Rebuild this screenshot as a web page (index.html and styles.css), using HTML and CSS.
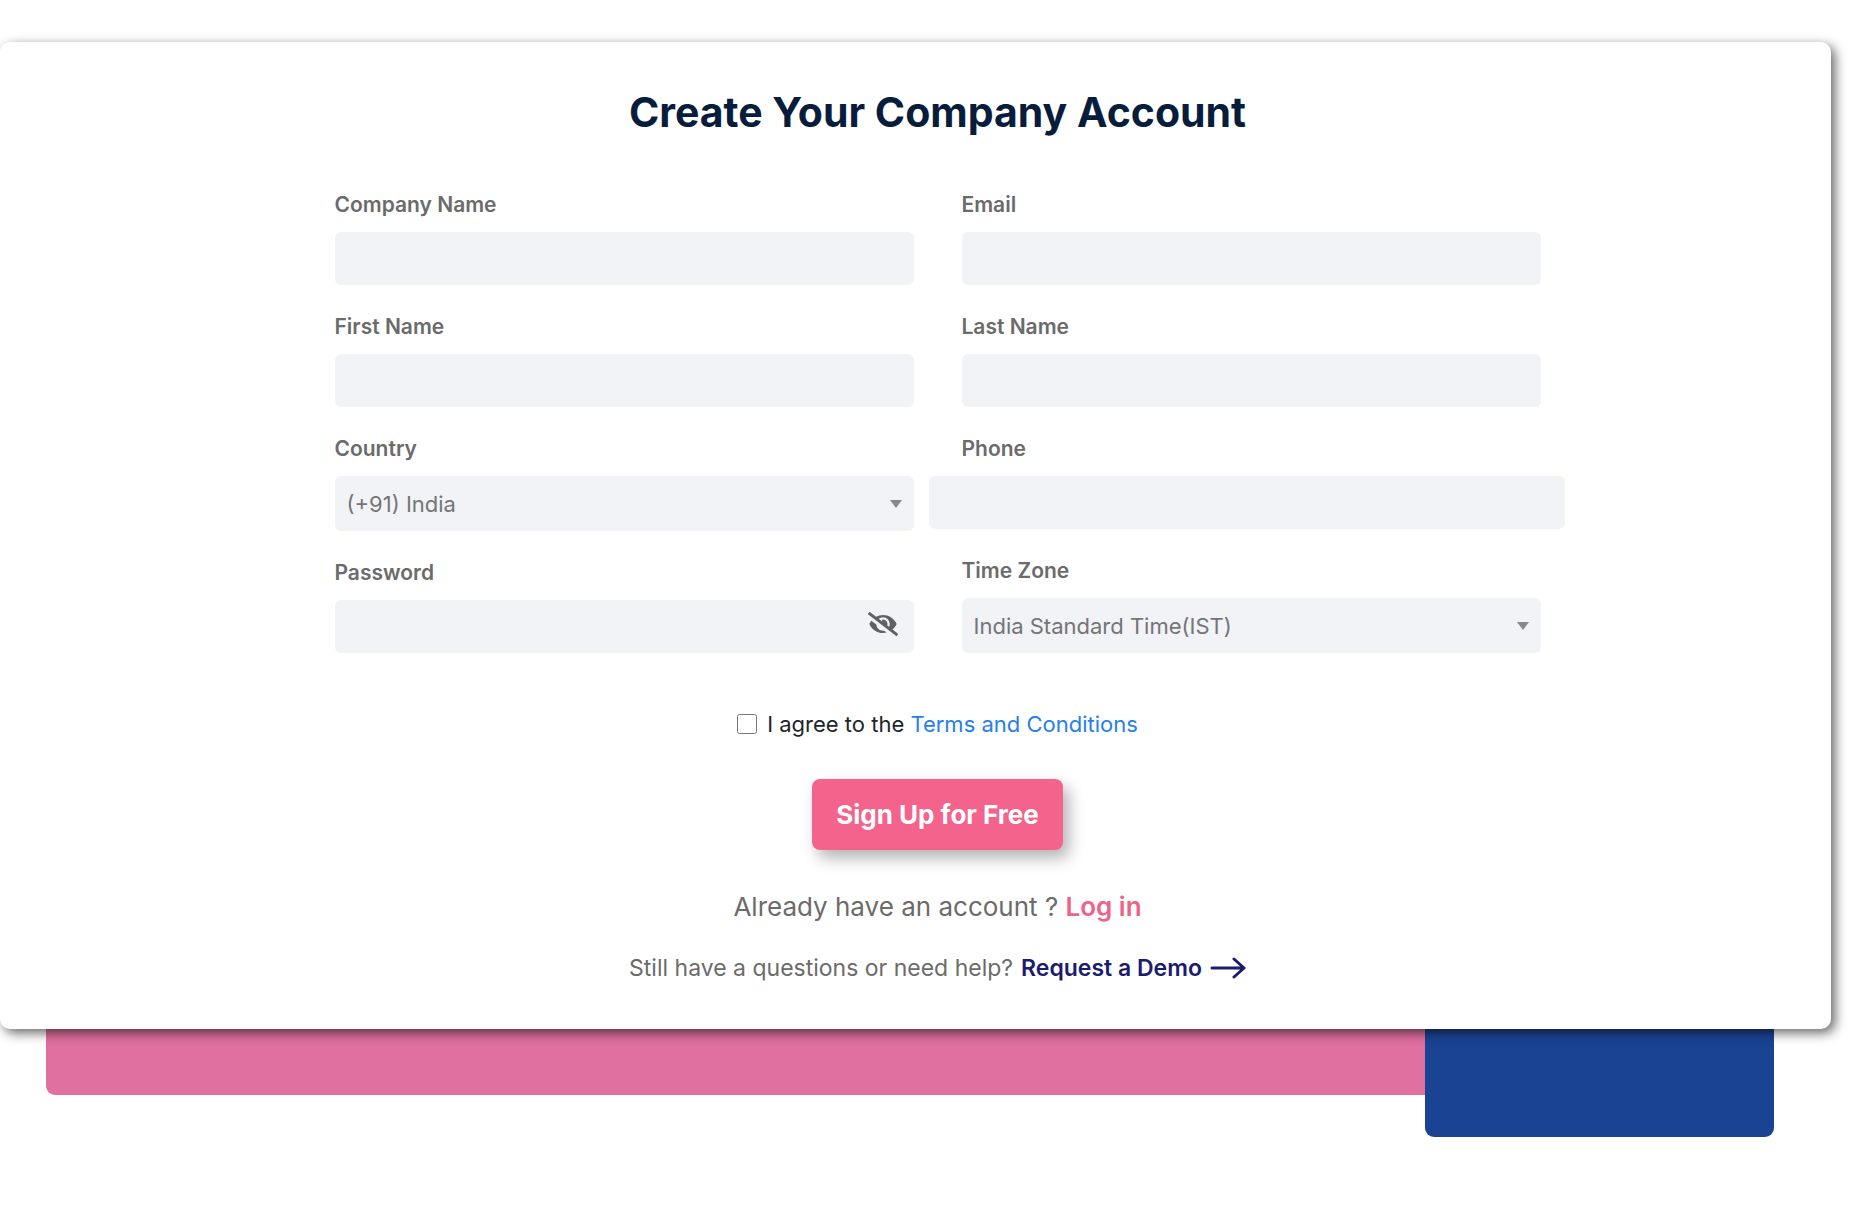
FILE: index.html
```html
<!DOCTYPE html>
<html lang="en">
<head>
<meta charset="utf-8">
<meta name="viewport" content="width=device-width, initial-scale=1">
<title>Create Your Company Account</title>
<link rel="stylesheet" href="styles.css">
</head>
<body>
<main class="stage">
  <section class="card">
    <h1 class="title">Create Your Company Account</h1>
    <form class="form">
      <div class="columns">
        <div class="column">
          <div class="field">
            <label for="company">Company Name</label>
            <input class="control" id="company" type="text">
          </div>
          <div class="field">
            <label for="first">First Name</label>
            <input class="control" id="first" type="text">
          </div>
          <div class="field">
            <label for="country">Country</label>
            <div class="select-wrap">
              <select class="control" id="country"><option>(+91) India</option></select>
              <svg class="caret" viewBox="0 0 12 8" aria-hidden="true"><path d="M0 0h12L6 8z"/></svg>
            </div>
          </div>
          <div class="field">
            <label for="password">Password</label>
            <div class="password-wrap">
              <input class="control" id="password" type="password">
              <button class="reveal" type="button" aria-label="Show password">
                <svg viewBox="0 0 640 512" aria-hidden="true"><path d="M320 400c-75.85 0-137.25-58.71-142.9-133.11L72.2 185.82c-13.79 17.3-26.48 35.59-36.72 55.59a32.35 32.35 0 0 0 0 29.19C89.71 376.41 197.07 448 320 448c26.91 0 52.87-4 77.89-10.46L346 397.39a144.13 144.13 0 0 1-26 2.61zm313.82 58.1l-110.55-85.44a331.25 331.25 0 0 0 81.25-102.07 32.35 32.35 0 0 0 0-29.19C550.29 135.59 442.93 64 320 64a308.15 308.15 0 0 0-147.32 37.7L45.46 3.37A16 16 0 0 0 23 6.18L3.37 31.45A16 16 0 0 0 6.18 53.9l588.36 454.73a16 16 0 0 0 22.46-2.81l19.64-25.27a16 16 0 0 0-2.82-22.45zm-183.72-142l-39.3-30.38A94.75 94.75 0 0 0 416 256a94.76 94.76 0 0 0-121.31-92.21A47.65 47.65 0 0 1 304 192a46.64 46.64 0 0 1-1.54 10l-73.61-56.89A142.31 142.31 0 0 1 320 112a143.92 143.92 0 0 1 144 144c0 21.63-5.29 41.79-13.9 60.11z"/></svg>
              </button>
            </div>
          </div>
        </div>
        <div class="column">
          <div class="field">
            <label for="email">Email</label>
            <input class="control" id="email" type="email">
          </div>
          <div class="field">
            <label for="last">Last Name</label>
            <input class="control" id="last" type="text">
          </div>
          <div class="field">
            <label for="phone">Phone</label>
            <div class="phone-row"><input class="control" id="phone" type="tel"></div>
          </div>
          <div class="field">
            <label for="zone">Time Zone</label>
            <div class="select-wrap">
              <select class="control" id="zone"><option>India Standard Time(IST)</option></select>
              <svg class="caret" viewBox="0 0 12 8" aria-hidden="true"><path d="M0 0h12L6 8z"/></svg>
            </div>
          </div>
        </div>
      </div>
      <div class="agree">
        <input class="tick" id="agree" type="checkbox">
        <label for="agree">I agree to the <a href="#terms">Terms and Conditions</a></label>
      </div>
      <button class="submit" type="submit">Sign Up for Free</button>
    </form>
    <p class="login">Already have an account ? <a href="#login">Log in</a></p>
    <p class="help">
      <span>Still have a questions or need help?</span>
      <a href="#demo">Request a Demo
        <svg class="arrow" viewBox="0 0 36 24" aria-hidden="true"><path d="M2 12h32M24 3l10 9-10 9"/></svg>
      </a>
    </p>
  </section>
  <div class="accents" aria-hidden="true">
    <div class="accent-pink"></div>
    <div class="accent-blue"></div>
  </div>
</main>
</body>
</html>
```
FILE: styles.css
```css
* {
  box-sizing: border-box;
}

body {
  margin: 0;
  background: #fff;
  color: #6b6b6b;
  font-family: Inter, "Open Sans", sans-serif;
  font-size: 22px;
}

a {
  text-decoration: none;
}

.stage {
  padding-top: 42px;
}

.card {
  position: relative;
  z-index: 1;
  display: flex;
  flex-direction: column;
  align-items: center;
  margin-right: 29px;
  padding: 40px 0 45px 44px;
  border-radius: 10px;
  background: #fff;
  box-shadow: 4px 4px 12px rgba(0, 0, 0, 0.6);
}

.title {
  margin: 0 0 48px;
  color: #071d3b;
  font-size: 41px;
  font-weight: 700;
  line-height: 60px;
}

.form {
  display: flex;
  flex-direction: column;
  align-items: center;
  width: 100%;
  max-width: 1206px;
}

.columns {
  display: flex;
  gap: 48px;
  width: 100%;
}

.column {
  display: flex;
  flex: 1;
  flex-direction: column;
  gap: 27px;
}

.field label {
  display: block;
  margin-bottom: 12px;
  font-size: 21px;
  font-weight: 600;
  line-height: 30px;
}

.control {
  display: block;
  width: 100%;
  height: 53px;
  padding: 0 12px;
  border: 0;
  border-radius: 6px;
  background: #f1f3f7;
  color: #757575;
  font: inherit;
}

select.control {
  height: 55px;
  appearance: none;
}

.select-wrap,
.password-wrap {
  position: relative;
}

.caret {
  position: absolute;
  top: 24px;
  right: 12px;
  width: 12px;
  height: 8px;
  fill: #888;
  pointer-events: none;
}

.reveal {
  position: absolute;
  top: 12px;
  right: 16px;
  width: 30px;
  height: 24px;
  padding: 0;
  border: 0;
  background: none;
}

.reveal svg {
  display: block;
  width: 30px;
  height: 24px;
  fill: #5f6064;
}

.phone-row {
  margin: 0 -24px 0 -33px;
}

.agree {
  display: flex;
  align-items: center;
  gap: 10px;
  margin-top: 55px;
  color: #212529;
  line-height: 32px;
}

.agree a {
  color: #2680eb;
}

.tick {
  width: 20px;
  height: 20px;
  margin: 0;
}

.submit {
  height: 71px;
  margin-top: 39px;
  padding: 0 24px;
  border: 0;
  border-radius: 8px;
  background: #f3638c;
  box-shadow: 6px 8px 16px rgba(0, 0, 0, 0.3);
  color: #fff;
  font: inherit;
  font-size: 26px;
  font-weight: 700;
}

.login {
  margin: 39px 0 0;
  font-size: 26px;
  line-height: 36px;
}

.login a {
  color: #ec6389;
  font-weight: 600;
}

.help {
  display: flex;
  gap: 8px;
  margin: 27px 0 0;
  font-size: 23px;
  line-height: 32px;
}

.help a {
  display: flex;
  align-items: center;
  gap: 8px;
  color: #1b1c6e;
  font-weight: 600;
}

.arrow {
  width: 36px;
  height: 24px;
  fill: none;
  stroke: currentColor;
  stroke-width: 3;
  stroke-linecap: round;
  stroke-linejoin: round;
}

.accents {
  display: flex;
  align-items: flex-start;
  padding: 0 86px 0 46px;
}

.accent-pink {
  flex: 1;
  height: 66px;
  border-radius: 0 0 0 9px;
  background: #e0709f;
}

.accent-blue {
  width: 349px;
  height: 108px;
  border-radius: 0 0 9px 9px;
  background: #1b4394;
}
```
